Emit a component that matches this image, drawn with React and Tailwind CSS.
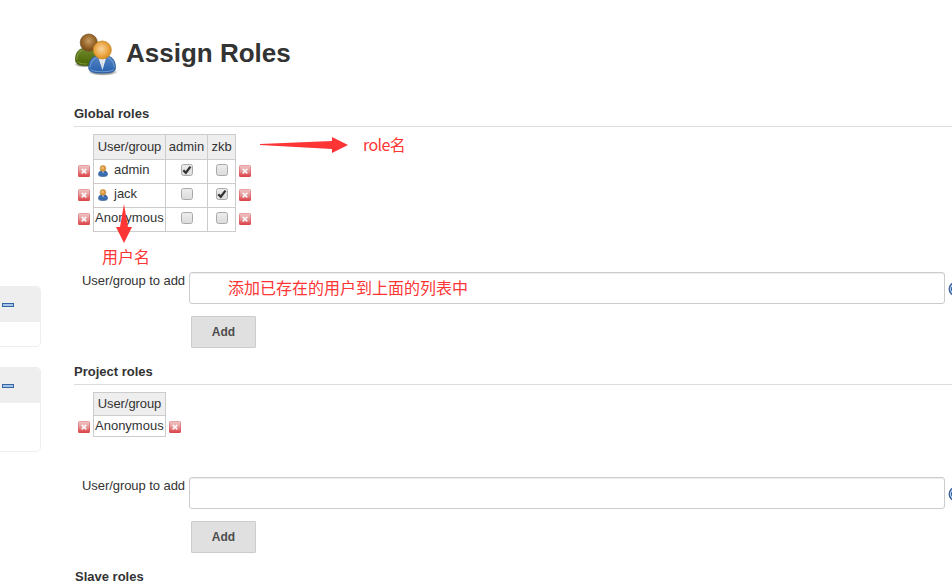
import React from "react";

function RemoveIcon() {
  return (
    <svg width="12" height="12" viewBox="0 0 12 12" className="block shrink-0">
      <defs>
        <linearGradient id="removeFill" x1="0" y1="0" x2="0" y2="1">
          <stop offset="0" stopColor="#f2c4c4" />
          <stop offset="0.5" stopColor="#e39a9a" />
          <stop offset="1" stopColor="#dc4046" />
        </linearGradient>
        <linearGradient id="removeEdge" x1="0" y1="0" x2="0" y2="1">
          <stop offset="0" stopColor="#e5a3a3" />
          <stop offset="1" stopColor="#d8484d" />
        </linearGradient>
      </defs>
      <rect x="0.5" y="0.5" width="11" height="11" rx="0.6" fill="url(#removeFill)" stroke="url(#removeEdge)" />
      <path d="M3.700 3.900l4.600 4.400M8.300 3.900l-4.600 4.400" stroke="#fff" strokeOpacity="0.9" strokeWidth="1.7" />
    </svg>
  );
}

function UserIcon() {
  return (
    <svg width="10" height="12" viewBox="0 0 10 12" className="block shrink-0">
      <path d="M0.500 9.300C0.500 7 2 5.600 5 5.600s4.500 1.400 4.500 3.700c0 1.800-1.300 2.200-4.500 2.200s-4.500-.4-4.500-2.200z" fill="#3a6cb0" stroke="#2c5592" strokeWidth="0.6" />
      <path d="M4.200 6h1.600L5 8.500z" fill="#dce7f5" />
      <circle cx="5" cy="3.400" r="2.900" fill="#dd9d42" stroke="#b07a30" strokeWidth="0.5" />
      <circle cx="4.600" cy="2.900" r="1.100" fill="#eebf7d" />
    </svg>
  );
}

function UsersLogo() {
  return (
    <svg width="48" height="48" viewBox="0 0 48 48" className="block shrink-0">
      <defs>
        <radialGradient id="headBack" cx="0.5" cy="0.4" r="0.6">
          <stop offset="0" stopColor="#c69b62" />
          <stop offset="0.6" stopColor="#97662a" />
          <stop offset="1" stopColor="#744814" />
        </radialGradient>
        <radialGradient id="headFront" cx="0.45" cy="0.45" r="0.6">
          <stop offset="0" stopColor="#f8d49f" />
          <stop offset="0.6" stopColor="#eaa746" />
          <stop offset="1" stopColor="#d98a16" />
        </radialGradient>
        <linearGradient id="bodyBack" x1="0" y1="0" x2="0" y2="1">
          <stop offset="0" stopColor="#70872c" />
          <stop offset="1" stopColor="#466500" />
        </linearGradient>
        <linearGradient id="bodyFront" x1="0" y1="0" x2="0" y2="1">
          <stop offset="0" stopColor="#5484c2" />
          <stop offset="1" stopColor="#2860ad" />
        </linearGradient>
        <radialGradient id="logoShadow">
          <stop offset="0.6" stopColor="#000" stopOpacity="0.4" />
          <stop offset="1" stopColor="#000" stopOpacity="0" />
        </radialGradient>
      </defs>
      <ellipse cx="31" cy="42" rx="15" ry="3.8" fill="url(#logoShadow)" />
      <ellipse cx="13" cy="34.5" rx="11" ry="3" fill="url(#logoShadow)" />
      <path d="M3.500 29.500c0-6.500 3-10.500 8-11h10c4 .5 6 5 6 11 0 4.500-3 6-12 6s-12-1.500-12-6z" fill="url(#bodyBack)" stroke="#466010" strokeWidth="0.8" />
      <path d="M4.800 29.500c.2-4.500 2-8 5.500-9.500M5.500 31.500c1.500 2 5 2.500 9.500 2.500" fill="none" stroke="#96ab5c" strokeWidth="0.7" />
      <path d="M16.700 37.500c0-6 3-11 8-11.200h10.800c5 .2 8 5.200 8 11.200 0 4-3 5.500-13.400 5.500s-13.400-1.500-13.400-5.500z" fill="url(#bodyFront)" stroke="#295998" strokeWidth="0.8" />
      <path d="M18 37.500c.5-5 3-9 6.500-9.800M42.200 37.500c-.5-5-3-9-6.500-9.800M18.200 39.500c3 3 20.800 3 23.800 0" fill="none" stroke="#8cb0dd" strokeWidth="0.7" />
      <path d="M26.500 28h7.500l-3.500 12z" fill="#e9edf2" />
      <path d="M30.300 30l-1 5 1.100 5 1-5z" fill="#cdd6e2" />
      <circle cx="16.800" cy="12.600" r="8.600" fill="url(#headBack)" stroke="#7d572a" strokeWidth="0.8" />
      <circle cx="30.300" cy="20" r="9" fill="url(#headFront)" stroke="#c48628" strokeWidth="0.8" />
    </svg>
  );
}

function Check({ checked }) {
  return (
    <span className="flex h-[12px] w-[12px] shrink-0 items-center justify-center rounded-[2.5px] border border-[#a9a9a9] bg-gradient-to-b from-[#ececec] to-[#dcdcdc]">
      {checked && (
        <svg width="10" height="10" viewBox="0 0 10 10" className="block shrink-0">
          <path d="M1.300 5.200l2.500 2.500L8.500 1.600" fill="none" stroke="#333" strokeWidth="2.300" />
        </svg>
      )}
    </span>
  );
}

function GlobalRow({ name, user, roles }) {
  return (
    <div className="flex h-6">
      <div className="w-[19px] pt-[5px] pl-1"><RemoveIcon /></div>
      <div className="flex w-[143px] border-b border-l border-[#ccc]">
        <div className="flex w-[72px] border-r border-[#ccc] pl-px leading-[20px]">
          {user && <span className="mr-[6px] ml-[3px] pt-[5px]"><UserIcon /></span>}
          <span>{name}</span>
        </div>
        <div className="flex w-[42px] justify-center border-r border-[#ccc] pt-[4px] pl-px"><Check checked={roles[0]} /></div>
        <div className="flex w-[28px] justify-center border-r border-[#ccc] pt-[4px]"><Check checked={roles[1]} /></div>
      </div>
      <div className="pt-[5px] pl-[3px]"><RemoveIcon /></div>
    </div>
  );
}

function Heading({ children }) {
  return <h2 className="h-[22px] border-b border-[#ddd] text-[13px] leading-[17px] font-bold">{children}</h2>;
}

function AddForm({ note }) {
  return (
    <div className="h-[76px]">
      <div className="flex">
        <label className="w-[115px] shrink-0 pl-2 leading-[17px] tracking-[-0.06px]">User/group to add</label>
        <div className="relative h-8 w-[756px] shrink-0 rounded-[3px] border border-[#ccc] bg-white shadow-[inset_0_1px_1px_rgba(0,0,0,0.075)]">
          {note && (
            <span className="absolute top-[4px] left-[38px] font-['Noto_Sans_CJK_SC',sans-serif] text-[16px] leading-[20px] whitespace-nowrap text-[#fd3535]">
              {note}
            </span>
          )}
        </div>
        <svg width="16" height="16" viewBox="0 0 16 16" className="mt-[9px] ml-[3px] shrink-0">
          <circle cx="8" cy="8" r="6.700" fill="#dbe7f6" stroke="#345f9d" strokeWidth="1.500" />
          <path d="M5 5.500a3 3 0 0 0 0 5M8 11v1.200" fill="none" stroke="#345f9d" strokeWidth="1.500" />
        </svg>
      </div>
      <button className="mt-3 ml-[117px] block h-8 w-[65px] rounded-[1px] border border-[#ccc] bg-[#e0e0e0] text-[12px] font-bold text-[#4d4d4d]">Add</button>
    </div>
  );
}

function SidePane({ tall }) {
  return (
    <div className={`w-[41px] overflow-hidden rounded-r-[5px] border border-l-0 border-[#eee] ${tall ? "h-[85px]" : "h-[61px]"}`}>
      <div className="h-[35px] bg-[#eee] pt-[16px] pl-[2px]">
        <div className="h-[4px] w-[12px] border border-[#3465a4] bg-[#a5c4e8]" />
      </div>
    </div>
  );
}

export default function App() {
  return (
    <div className="relative flex h-[585px] w-[952px] overflow-hidden bg-white font-['Liberation_Sans',Arial,sans-serif] text-[13px] text-[#333]">
      <aside className="flex w-[74px] shrink-0 flex-col gap-5 pt-[286px]">
        <SidePane />
        <SidePane tall />
      </aside>
      <main className="flex min-w-0 flex-1 flex-col">
        <header className="-ml-[2px] flex h-[105px] shrink-0 pt-[30px]">
          <UsersLogo />
          <h1 className="ml-[6px] text-[26px] leading-[46px] font-bold">Assign Roles</h1>
        </header>

        <div className="shrink-0"><Heading>Global roles</Heading></div>
        <section className="h-[145px] shrink-0 pt-[7px]">
          <div className="ml-[19px] flex h-[26px] w-[143px] border border-r-0 border-[#ccc] bg-[#eee] text-center leading-[24px]">
            <div className="w-[72px] border-r border-[#ccc] tracking-[-0.08px]">User/group</div>
            <div className="w-[42px] border-r border-[#ccc]">admin</div>
            <div className="w-[28px] border-r border-[#ccc]">zkb</div>
          </div>
          <GlobalRow name="admin" user roles={[true, false]} />
          <GlobalRow name="jack" user roles={[false, true]} />
          <GlobalRow name="Anonymous" roles={[false, false]} />
        </section>
        <div className="shrink-0"><AddForm note="添加已存在的用户到上面的列表中" /></div>

        <div className="shrink-0 pt-[15px]"><Heading>Project roles</Heading></div>
        <section className="h-[92px] shrink-0 pt-[7px]">
          <div className="ml-[19px] h-[24px] w-[73px] border border-[#ccc] bg-[#eee] text-center leading-[22px] tracking-[-0.08px]">User/group</div>
          <div className="flex h-[21px]">
            <div className="w-[19px] pt-[5px] pl-1"><RemoveIcon /></div>
            <div className="w-[73px] border border-t-0 border-[#ccc] pl-px leading-[20px]">Anonymous</div>
            <div className="pt-[5px] pl-[3px]"><RemoveIcon /></div>
          </div>
        </section>
        <div className="shrink-0"><AddForm /></div>

        <div className="shrink-0 pt-[15px] pl-px"><Heading>Slave roles</Heading></div>
      </main>

      <svg width="88" height="16" viewBox="0 0 88 16" className="absolute top-[137px] left-[260px]">
        <path d="M0 7l72-3V0l16 8-16 8v-4L0 8z" fill="#fd3535" />
      </svg>
      <span className="absolute top-[134px] left-[363px] font-['Noto_Sans_CJK_SC',sans-serif] text-[16px] leading-[20px] tracking-[-0.6px] text-[#fd3535]">role名</span>
      <svg width="16" height="39" viewBox="0 0 16 39" className="absolute top-[204px] left-[116px]">
        <path d="M8 0l4 23h4L8 39 0 23h4z" fill="#fd3535" />
      </svg>
      <span className="absolute top-[246px] left-[102px] font-['Noto_Sans_CJK_SC',sans-serif] text-[16px] leading-[20px] text-[#fd3535]">用户名</span>
    </div>
  );
}
